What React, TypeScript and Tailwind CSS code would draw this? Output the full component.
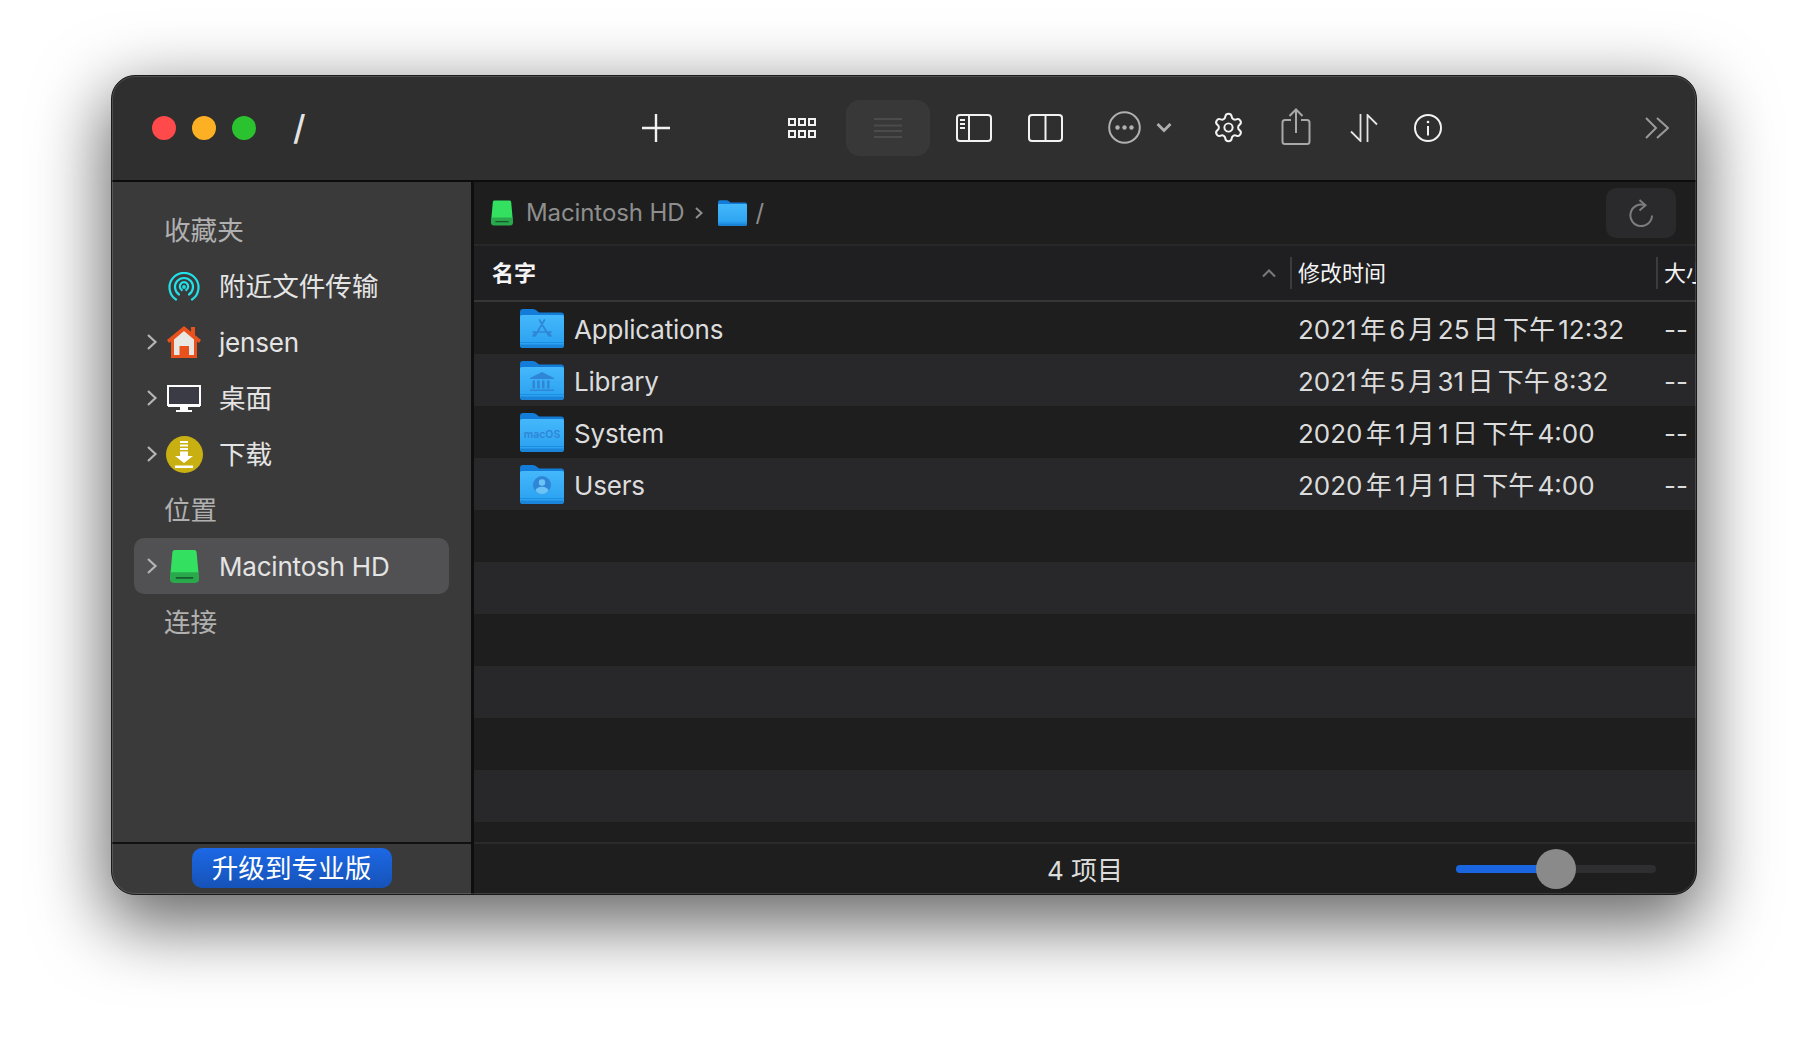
import React from "react";
import { Settings } from "lucide-react";

const Drive = ({ w, h }: { w: number; h: number }) => (
  <svg width={w} height={h} viewBox="0 0 30 34" className="shrink-0">
    <path d="M2.500 2Q2.700 0 5 0H25Q27.300 0 27.500 2L29.500 24H0.500Z" fill="#34e060" />
    <path d="M0.500 23H29.500L30 26V30Q30 34 26 34H4Q0 34 0 30V26Z" fill="#2aa84c" />
    <rect x="6" y="28" width="18" height="1.600" fill="#14522a" />
  </svg>
);

const Folder = ({ kind, w = 44, h = 39 }: { kind?: string; w?: number; h?: number }) => {
  const id = "fold" + (kind ?? "n") + w;
  const c = "#2f86d6";
  return (
    <svg width={w} height={h} viewBox="0 0 44 39" className="shrink-0">
      <defs>
        <linearGradient id={id} x1="0" y1="0" x2="0" y2="1">
          <stop offset="0" stopColor="#45b8fb" />
          <stop offset="1" stopColor="#28a0f0" />
        </linearGradient>
      </defs>
      <path d="M0 3Q0 0 3 0H13Q15 0 16.500 1.500L19 3.500H41Q44 3.500 44 6V14H0Z" fill="#137cd8" />
      <path d="M0 7.500Q0 6 2 6H42Q44 6 44 7.500V36Q44 39 41 39H3Q0 39 0 36Z" fill={`url(#${id})`} />
      <rect x="0" y="33" width="44" height="1" fill="#1d8de0" />
      <path d="M0 35.500H44V36Q44 39 41 39H3Q0 39 0 36Z" fill="#1a84d8" />
      {kind === "app" && (
        <g stroke={c} strokeWidth="1.700" fill="none" strokeLinecap="round">
          <path d="M24.500 11L15 27M19.500 11L29 27M13 23H31M13 27L15 24M31 27L29 24" />
        </g>
      )}
      {kind === "lib" && (
        <g fill={c}>
          <path d="M22 11L34 17V18H10V17Z" />
          <rect x="12.500" y="19.500" width="2.500" height="8" />
          <rect x="17.200" y="19.500" width="2.500" height="8" />
          <rect x="22" y="19.500" width="2.500" height="8" />
          <rect x="27" y="19.500" width="2.500" height="8" />
          <rect x="10" y="28.500" width="24" height="1.500" />
        </g>
      )}
      {kind === "sys" && (
        <text x="22" y="25" textAnchor="middle" fontSize="10.500" fontWeight="600" fill={c} fontFamily="Inter, sans-serif">
          macOS
        </text>
      )}
      {kind === "usr" && (
        <g>
          <circle cx="22" cy="20" r="9" fill={c} />
          <circle cx="22" cy="17.500" r="3.200" fill="#6cc4f6" />
          <path d="M15.500 25.500Q17 21.800 22 21.800T28.500 25.500Q26 29 22 29T15.500 25.500Z" fill="#6cc4f6" />
        </g>
      )}
    </svg>
  );
};

const Chevron = () => (
  <svg width="12" height="18" viewBox="0 0 12 18" className="shrink-0">
    <path d="M2 2L9.500 9L2 16" fill="none" stroke="#b4b4b4" strokeWidth="2.200" />
  </svg>
);

const SideRow = ({
  label,
  chevron,
  icon,
  active,
  latin,
}: {
  label: string;
  chevron?: boolean;
  icon: React.ReactNode;
  active?: boolean;
  latin?: boolean;
}) => (
  <div className={`h-[56px] mx-[22px] rounded-[10px] flex items-center ${active ? "bg-[#515153]" : ""}`}>
    <div className="w-[12px] ml-[12px] flex items-center">{chevron && <Chevron />}</div>
    <div className="w-[48px] ml-[2px] flex items-center justify-center">{icon}</div>
    <span className={`ml-[11px] pt-[1px] leading-none text-[#e4e4e4] ${latin ? "text-[26px] tracking-[-0.2px]" : "text-[26.600px]"}`}>{label}</span>
  </div>
);

const SideHead = ({ label }: { label: string }) => (
  <div className="h-[56px] pl-[52px] pt-[1px] flex items-center text-[26.600px] leading-none text-[#b0b0b0]">{label}</div>
);

const rows = [
  { name: "Applications", kind: "app", date: "2021年6月25日 下午12:32" },
  { name: "Library", kind: "lib", date: "2021年5月31日 下午8:32" },
  { name: "System", kind: "sys", date: "2020年1月1日 下午4:00" },
  { name: "Users", kind: "usr", date: "2020年1月1日 下午4:00" },
];

const W = "#f2f2f2";

export default function App() {
  return (
    <div className="h-[1042px] bg-white overflow-hidden pt-[75px] font-['Inter','Noto_Sans_CJK_SC',sans-serif]">
      <div className="relative w-[1586px] h-[820px] ml-[111px] rounded-[24px] overflow-hidden border border-[#1a1a1a] shadow-[0_24px_70px_6px_rgba(0,0,0,0.6)] flex flex-col bg-[#2f2f2f]">
        {/* toolbar */}
        <div className="h-[106px] shrink-0 bg-[#2f2f2f] border-b-2 border-[#0c0c0c] flex items-center pb-[1px]">
          <div className="ml-[40px] flex gap-[16px]">
            <div className="w-[24px] h-[24px] rounded-full bg-[#fe4a4a]" />
            <div className="w-[24px] h-[24px] rounded-full bg-[#feb024]" />
            <div className="w-[24px] h-[24px] rounded-full bg-[#2ac22e]" />
          </div>
          <span className="ml-[37px] w-[20px] shrink-0 text-[34px] leading-none font-medium text-[#e4e4e4]">/</span>
          {/* plus */}
          <svg width="28" height="28" viewBox="0 0 28 28" className="ml-[329px] shrink-0">
            <path d="M14 0V28M0 14H28" stroke={W} strokeWidth="2.400" />
          </svg>
          {/* grid */}
          <svg width="28" height="20" viewBox="0 0 28 20" className="ml-[118px] shrink-0">
            {[1, 11, 21].map((x) =>
              [1, 13].map((y) => (
                <rect key={`${x}-${y}`} x={x} y={y} width="6" height="6" fill="none" stroke={W} strokeWidth="2" />
              )),
            )}
          </svg>
          {/* list active */}
          <div className="ml-[30px] w-[84px] h-[56px] shrink-0 rounded-[14px] bg-[#383838] flex items-center justify-center">
            <svg width="28" height="20" viewBox="0 0 28 20">
              <path d="M0 1H28M0 7.500H28M0 13H28M0 19H28" stroke="#4b4b4b" strokeWidth="2" />
            </svg>
          </div>
          {/* sidebar */}
          <svg width="36" height="28" viewBox="0 0 36 28" className="ml-[26px] shrink-0">
            <rect x="1" y="1" width="34" height="26" rx="3" fill="none" stroke={W} strokeWidth="2" />
            <path d="M13 1V27" stroke={W} strokeWidth="2" />
            <path d="M4 6H9M4 10H9M4 14H9" stroke={W} strokeWidth="2" />
          </svg>
          {/* split */}
          <svg width="35" height="28" viewBox="0 0 35 28" className="ml-[36px] shrink-0">
            <rect x="1" y="1" width="33" height="26" rx="3" fill="none" stroke={W} strokeWidth="2" />
            <path d="M17.500 1V27" stroke={W} strokeWidth="2" />
          </svg>
          {/* more */}
          <svg width="33" height="33" viewBox="0 0 33 33" className="ml-[45px] shrink-0">
            <circle cx="16.500" cy="16.500" r="15.300" fill="none" stroke="#b0b0b0" strokeWidth="2" />
            <circle cx="9.500" cy="16.500" r="2.200" fill="#b0b0b0" />
            <circle cx="16.500" cy="16.500" r="2.200" fill="#b0b0b0" />
            <circle cx="23.500" cy="16.500" r="2.200" fill="#b0b0b0" />
          </svg>
          <svg width="16" height="11" viewBox="0 0 16 11" className="ml-[15px] shrink-0">
            <path d="M1.500 2L8 8.500L14.500 2" fill="none" stroke="#b0b0b0" strokeWidth="2.800" />
          </svg>
          {/* gear */}
          <Settings size={33} strokeWidth={1.45} color={W} className="ml-[39.500px] shrink-0" />
          {/* share */}
          <svg width="30" height="37" viewBox="0 0 30 37" className="ml-[36.500px] shrink-0 -mt-[2px]" fill="none" stroke="#a8a8a8" strokeWidth="2">
            <path d="M10 12H4Q1.500 12 1.500 14.500V33.500Q1.500 36 4 36H26Q28.500 36 28.500 33.500V14.500Q28.500 12 26 12H20" />
            <path d="M15 25V1.500M8.500 8L15 1.500L21.500 8" />
          </svg>
          {/* sort */}
          <svg width="28" height="28" viewBox="0 0 28 28" className="ml-[39px] shrink-0" fill="none" stroke="#e4e4e4" strokeWidth="1.800">
            <path d="M10.500 0V27L1 17.500" />
            <path d="M17.500 28V1L27 10.500" />
          </svg>
          {/* info */}
          <svg width="28" height="28" viewBox="0 0 28 28" className="ml-[36px] shrink-0" fill="none" stroke={W} strokeWidth="2">
            <circle cx="14" cy="14" r="13" />
            <path d="M14 12V21.500" />
            <circle cx="14" cy="8" r="1.300" fill={W} stroke="none" />
          </svg>
          {/* overflow */}
          <svg width="24" height="22" viewBox="0 0 24 22" className="ml-auto mr-[27px] shrink-0" fill="none" stroke="#9a9a9a" strokeWidth="2">
            <path d="M1 1L11 11L1 21M12 1L23 11L12 21" />
          </svg>
        </div>

        {/* body */}
        <div className="flex-1 flex min-h-0">
          {/* sidebar */}
          <div className="w-[359px] shrink-0 flex flex-col bg-[#3a3a3a]">
            <div className="flex-1 pt-[20px] border-b-2 border-[#111]">
              <SideHead label="收藏夹" />
              <SideRow
                label="附近文件传输"
                icon={
                  <svg width="32" height="29" viewBox="0 0 32 29" fill="none" stroke="#22dfe8" strokeWidth="2.200" strokeLinecap="round">
                    <path d="M8 27.500A14.500 14.500 0 1 1 24 27.500" />
                    <path d="M11 22.500A9 9 0 1 1 21 22.500" />
                    <path d="M13.800 18A4.200 4.200 0 1 1 18.200 18" />
                    <circle cx="16" cy="15" r="0.800" fill="#22dfe8" />
                  </svg>
                }
              />
              <SideRow
                label="jensen"
                chevron
                latin
                icon={
                  <svg width="34" height="32" viewBox="0 0 34 32">
                    <rect x="24" y="1" width="4" height="8" fill="#e9521c" />
                    <path d="M17 0L34 14L32 17L30 15.400V32H4V15.400L2 17L0 14Z" fill="#e9521c" />
                    <path d="M17 5L27 13.500V29H7V13.500Z" fill="#e9e7e4" />
                    <rect x="12.500" y="20" width="9.500" height="12" fill="#e9521c" />
                  </svg>
                }
              />
              <SideRow
                label="桌面"
                chevron
                icon={
                  <svg width="34" height="27" viewBox="0 0 34 27">
                    <rect x="1" y="1" width="32" height="19" fill="#3a3b44" stroke="#fff" strokeWidth="2" />
                    <rect x="1" y="20" width="32" height="2" fill="#fff" />
                    <rect x="13" y="22" width="8" height="3" fill="#fff" />
                    <rect x="9" y="25" width="16" height="2" fill="#fff" />
                  </svg>
                }
              />
              <SideRow
                label="下载"
                chevron
                icon={
                  <div className="w-[37px] h-[37px] rounded-full bg-[#c9b012] flex items-center justify-center">
                    <svg width="18" height="27" viewBox="0 0 18 27" fill="#fff">
                      <rect x="5" y="0" width="8" height="2" />
                      <rect x="5" y="3.500" width="8" height="2" />
                      <rect x="5" y="7" width="8" height="2" />
                      <path d="M5 10.500H13V15H18L9 22L0 15H5Z" />
                      <rect x="0" y="24.500" width="18" height="2.500" />
                    </svg>
                  </div>
                }
              />
              <SideHead label="位置" />
              <SideRow label="Macintosh HD" chevron latin active icon={<Drive w={29} h={33} />} />
              <SideHead label="连接" />
            </div>
            <div className="h-[50px] shrink-0 flex items-start justify-center pt-[4px]">
              <div className="w-[200px] h-[40px] rounded-[10px] bg-gradient-to-b from-[#1c68e6] to-[#1653b8] flex items-center justify-center text-[26.600px] leading-none text-white">
                升级到专业版
              </div>
            </div>
          </div>
          <div className="w-[3px] shrink-0 bg-[#0e0e0e]" />

          {/* main */}
          <div className="flex-1 min-w-0 flex flex-col bg-[#1e1e1e]">
            {/* breadcrumb */}
            <div className="h-[64px] shrink-0 flex items-center border-b-2 border-[#282828] pl-[17px] pb-[1px] text-[24px] leading-none text-[#8e8e8e]">
              <Drive w={22} h={26} />
              <span className="ml-[13px] tracking-[-0.1px]">Macintosh HD</span>
              <svg width="8" height="14" viewBox="0 0 8 14" className="ml-[11px] shrink-0">
                <path d="M1 2L6.500 7L1 12" fill="none" stroke="#8e8e8e" strokeWidth="2" />
              </svg>
              <div className="ml-[15px] flex items-center">
                <Folder w={29} h={26} />
              </div>
              <span className="ml-[8px]">/</span>
              <div className="ml-auto mr-[20px] w-[70px] h-[50px] rounded-[10px] bg-[#2a2a2c] flex items-center justify-center">
                <svg width="24" height="28" viewBox="0 0 24 28" fill="none" stroke="#7c7c7c" strokeWidth="2">
                  <path d="M16 6.200A10.800 10.800 0 1 0 23 16.500" />
                  <path d="M10.500 1L16.500 6.200L10.500 11.500" />
                </svg>
              </div>
            </div>
            {/* header */}
            <div className="h-[56px] shrink-0 flex items-center bg-[#1f1f21] border-b-2 border-[#363636] overflow-hidden text-[22px] leading-none text-[#f4f4f4]">
              <div className="w-[816px] shrink-0 flex items-center pl-[18px]">
                <span className="font-bold">名字</span>
                <svg width="16" height="10" viewBox="0 0 16 10" className="ml-auto mr-[13px] shrink-0">
                  <path d="M2 8.500L8 2.500L14 8.500" fill="none" stroke="#7a7a7a" strokeWidth="2" />
                </svg>
              </div>
              <div className="w-[2px] h-[32px] bg-[#3c3c3c] shrink-0" />
              <div className="w-[364px] shrink-0 pl-[6px]">修改时间</div>
              <div className="w-[2px] h-[32px] bg-[#3c3c3c] shrink-0" />
              <div className="pl-[6px] whitespace-nowrap">大小</div>
            </div>
            {/* rows */}
            <div className="flex-1 min-h-0 overflow-hidden">
              {Array.from({ length: 10 }).map((_, i) => {
                const r = rows[i];
                return (
                  <div key={i} className={`h-[52px] flex items-center text-[26px] leading-none text-[#dcdcdc] ${i % 2 ? "bg-[#28282a]" : "bg-[#1e1e1e]"}`}>
                    {r && (
                      <>
                        <div className="w-[824px] shrink-0 flex items-center pl-[46px]">
                          <Folder kind={r.kind} />
                          <span className="ml-[10px] pt-[4px] tracking-[-0.2px]">{r.name}</span>
                        </div>
                        <div className="w-[367px] shrink-0 whitespace-nowrap pt-[4px] [text-autospace:normal] [word-spacing:-3px]">{r.date}</div>
                        <div className="pt-[4px] -ml-[1px]">--</div>
                      </>
                    )}
                  </div>
                );
              })}
            </div>
            {/* footer */}
            <div className="h-[52px] shrink-0 border-t-2 border-[#2a2a2a] flex items-center">
              <span className="ml-[573px] pt-[3px] text-[26px] leading-none text-[#dcdcdc]">4 项目</span>
              <div className="ml-auto mr-[40px] w-[200px] h-[8px] rounded-full bg-[#2e2e30] relative">
                <div className="w-[84px] h-[8px] rounded-l-full bg-[#1a66e0]" />
                <div className="absolute left-[80px] -top-[16px] w-[40px] h-[40px] rounded-full bg-[#8a8a8a]" />
              </div>
            </div>
          </div>
        </div>
        <div className="absolute inset-0 rounded-[23px] border border-white/15 pointer-events-none" />
      </div>
    </div>
  );
}
